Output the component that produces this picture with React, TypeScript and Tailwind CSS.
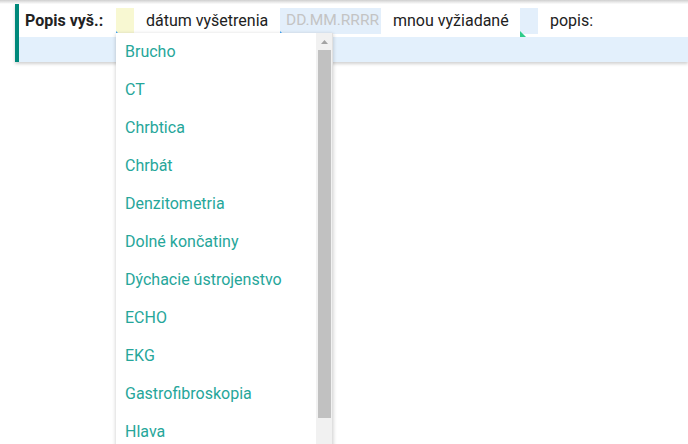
const items = [
  "Brucho",
  "CT",
  "Chrbtica",
  "Chrbát",
  "Denzitometria",
  "Dolné končatiny",
  "Dýchacie ústrojenstvo",
  "ECHO",
  "EKG",
  "Gastrofibroskopia",
  "Hlava",
];

export default function App() {
  return (
    <div className="relative h-[444px] w-[688px] overflow-hidden bg-white font-['Roboto',sans-serif] text-[16px] text-[#212121]">
      <div className="h-[4px] bg-gradient-to-b from-[#cfcfcf] to-white" />

      <div className="ml-[15px] border-l-4 border-[#00897b] shadow-[0_2px_3px_rgba(0,0,0,0.18)]">
        <div className="flex h-[33px] items-center">
          <span className="w-[97px] pl-[6px] font-bold text-[#222]">Popis vyš.:</span>
          <span className="relative h-[26px] w-[18px] bg-[#f8f8d2]">
            <span className="absolute bottom-0 left-0 h-0 w-0 border-b-[3px] border-r-[3px] border-b-[#42a5f5] border-r-transparent" />
          </span>
          <span className="ml-[12px] w-[134px]">dátum vyšetrenia</span>
          <span className="relative flex h-[26px] w-[101px] items-center overflow-hidden whitespace-nowrap bg-[#e3effb] pl-[6px] text-[15.5px] text-[#c4c4c4]">
            DD.MM.RRRR
            <span className="absolute bottom-0 left-0 h-0 w-0 border-b-[3px] border-r-[3px] border-b-[#42a5f5] border-r-transparent" />
          </span>
          <span className="ml-[12px] w-[127px]">mnou vyžiadané</span>
          <span className="relative h-[26px] w-[18px] bg-[#e3effb]">
            <span className="absolute -bottom-[3px] left-0 h-0 w-0 border-b-[6px] border-r-[6px] border-b-[#2ecc8a] border-r-transparent" />
          </span>
          <span className="ml-[12px]">popis:</span>
        </div>
        <div className="h-[25px] bg-[#e3f0fc]" />
      </div>

      <div className="absolute left-[116px] top-[33px] flex h-[420px] w-[217px] bg-white shadow-[0_1px_4px_rgba(0,0,0,0.22)]">
        <ul className="flex-1 overflow-hidden">
          {items.map((item) => (
            <li key={item} className="flex h-[38px] items-center pl-[9px] text-[16px] text-[#26a69a]">
              {item}
            </li>
          ))}
        </ul>
        <div className="flex w-[17px] flex-col items-center border-r border-[#e0e0e0] bg-[#f1f1f1]">
          <svg width="17" height="17" viewBox="0 0 17 17">
            <path d="M5 11 L8.5 7 L12 11 Z" fill="#a3a3a3" />
          </svg>
          <div className="h-[368px] w-[13px] bg-[#c1c1c1]" />
        </div>
      </div>
    </div>
  );
}
